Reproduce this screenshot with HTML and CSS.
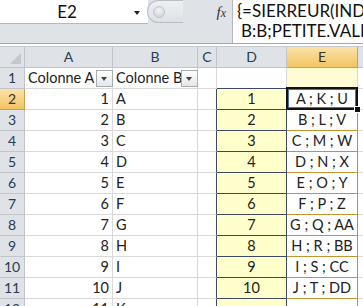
FILE: index.html
```html
<!DOCTYPE html>
<html>
<head>
	<meta charset="utf-8">
	<title>Colonne A / Colonne B</title>
	<link rel="stylesheet" href="styles.css">
</head>
<body>

<div class="formula-bar">
	<div class="bar-left">
		<div class="name-row">
			<div class="name-box">
				<span class="name">E2</span>
				<span class="caret"></span>
			</div>
			<div class="grip"><span class="knob"></span></div>
			<div class="fx">f<span>x</span></div>
		</div>
	</div>
	<div class="formula">
		<div class="line">{=SIERREUR(INDEX(A:A;</div>
		<div class="line wrap">B:B;PETITE.VALEUR(SI(</div>
	</div>
</div>
<div class="bar-gap"></div>

<div class="sheet">
	<!-- column headers -->
	<div class="corner">
		<svg width="11" height="11" viewBox="0 0 11 11"><polygon points="11,0 11,11 0,11" fill="#c4c8cd"/></svg>
	</div>
	<div class="ch">A</div>
	<div class="ch">B</div>
	<div class="ch">C</div>
	<div class="ch">D</div>
	<div class="ch ch-sel">E</div>
	<div class="ch"></div>

	<!-- row 1 -->
	<div class="rh">1</div>
	<div class="c head">Colonne A<span class="filter"></span></div>
	<div class="c head">Colonne B<span class="filter"></span></div>
	<div class="c"></div>
	<div class="c d-top"></div>
	<div class="c e-top"></div>
	<div class="c"></div>

	<div class="rh rh-sel">2</div>
	<div class="c num">1</div><div class="c">A</div><div class="c pre"></div>
	<div class="c d">1</div><div class="c e sel">A ; K ; U</div><div class="c"></div>

	<div class="rh">3</div>
	<div class="c num">2</div><div class="c">B</div><div class="c pre"></div>
	<div class="c d">2</div><div class="c e">B ; L ; V</div><div class="c"></div>

	<div class="rh">4</div>
	<div class="c num">3</div><div class="c">C</div><div class="c pre"></div>
	<div class="c d">3</div><div class="c e">C ; M ; W</div><div class="c"></div>

	<div class="rh">5</div>
	<div class="c num">4</div><div class="c">D</div><div class="c pre"></div>
	<div class="c d">4</div><div class="c e">D ; N ; X</div><div class="c"></div>

	<div class="rh">6</div>
	<div class="c num">5</div><div class="c">E</div><div class="c pre"></div>
	<div class="c d">5</div><div class="c e">E ; O ; Y</div><div class="c"></div>

	<div class="rh">7</div>
	<div class="c num">6</div><div class="c">F</div><div class="c pre"></div>
	<div class="c d">6</div><div class="c e">F ; P ; Z</div><div class="c"></div>

	<div class="rh">8</div>
	<div class="c num">7</div><div class="c">G</div><div class="c pre"></div>
	<div class="c d">7</div><div class="c e">G ; Q ; AA</div><div class="c"></div>

	<div class="rh">9</div>
	<div class="c num">8</div><div class="c">H</div><div class="c pre"></div>
	<div class="c d">8</div><div class="c e">H ; R ; BB</div><div class="c"></div>

	<div class="rh">10</div>
	<div class="c num">9</div><div class="c">I</div><div class="c pre"></div>
	<div class="c d">9</div><div class="c e">I ; S ; CC</div><div class="c"></div>

	<div class="rh">11</div>
	<div class="c num">10</div><div class="c">J</div><div class="c pre"></div>
	<div class="c d">10</div><div class="c e">J ; T ; DD</div><div class="c"></div>

	<div class="rh">12</div>
	<div class="c num">11</div><div class="c">K</div><div class="c pre"></div>
	<div class="c d"></div><div class="c e"></div><div class="c"></div>
</div>

</body>
</html>
```

FILE: styles.css
```css
body {
	margin: 0;
	background-color: #fff;
	color: #222;
	font-family: Lato, "Liberation Sans", sans-serif;
	overflow: hidden;
}

/* formula bar */

.formula-bar {
	display: flex;
	height: 44px;
	box-sizing: border-box;
	background-color: #dfe3e8;
	border-bottom: 1px solid #9fa6ae;
}

.bar-left {
	width: 232px;
	flex: none;
}

.name-row {
	display: flex;
	height: 24px;
}

.name-box {
	width: 148px;
	box-sizing: border-box;
	display: flex;
	align-items: center;
	background-color: #fff;
	border-bottom: 1px solid #b3b9c0;
}

.name {
	flex: 1;
	text-align: center;
	font-size: 17px;
	color: #111;
}

.caret {
	width: 0;
	height: 0;
	margin: 2px 8px 0 0;
	border-top: 4px solid #222;
	border-left: 3.5px solid transparent;
	border-right: 3.5px solid transparent;
}

.grip {
	width: 36px;
	height: 23px;
	margin-left: -1px;
	box-sizing: border-box;
	border: 1px solid #b9bec5;
	border-right: none;
	border-radius: 12px 0 0 12px;
	background: linear-gradient(#eef0f2, #dde1e6);
	display: flex;
	align-items: center;
	padding-left: 5px;
}

.knob {
	width: 10px;
	height: 10px;
	border-radius: 50%;
	background: radial-gradient(circle at 50% 35%, #f4f5f7, #c9cdd2);
	border: 1px solid #c2c6cb;
}

.fx {
	flex: 1;
	text-align: right;
	padding-right: 6px;
	font-family: "Liberation Serif", serif;
	font-style: italic;
	font-size: 15px;
	line-height: 24px;
	color: #333;
}

.fx span {
	font-size: 12px;
}

.formula {
	flex: 1;
	overflow: hidden;
	background-color: #fff;
	border-left: 1px solid #b3b9c0;
	padding: 1px 0 0 4px;
	font-size: 17px;
	line-height: 20px;
	color: #111;
}

.line {
	white-space: nowrap;
}

.wrap {
	padding-left: 4px;
}

.bar-gap {
	height: 2px;
	background-color: #fff;
}

/* sheet grid */

.sheet {
	display: grid;
	grid-template-columns: 25px 88px 85px 19px 70px 71px 1fr;
	grid-auto-rows: 21px;
	border-top: 1px solid #c5c9cf;
}

.corner, .ch, .rh {
	box-sizing: border-box;
	background-color: #dfe3e8;
	border-right: 1px solid #c0c5cb;
	border-bottom: 1px solid #c0c5cb;
	color: #2b3b52;
	font-size: 14px;
	text-align: center;
	line-height: 20px;
}

.corner {
	display: flex;
	align-items: flex-end;
	justify-content: flex-end;
	padding: 0 3px 3px 0;
}

.corner svg {
	display: block;
}

.ch-sel, .rh-sel {
	background: linear-gradient(#fbe3a8, #f2c463);
	border-color: #c9a24f;
	color: #3a3320;
}

.c {
	position: relative;
	box-sizing: border-box;
	border-right: 1px solid #d9d9d9;
	border-bottom: 1px solid #d9d9d9;
	padding: 0 3px;
	font-size: 14.5px;
	line-height: 20px;
	white-space: nowrap;
}

.num {
	text-align: right;
}

.head {
	overflow: visible;
}

.filter {
	position: absolute;
	z-index: 2;
	right: -1px;
	top: 2px;
	width: 17px;
	height: 17px;
	box-sizing: border-box;
	border: 1px solid #a9adb2;
	background: linear-gradient(#fdfdfd, #e4e7ea);
}

.filter::after {
	content: "";
	position: absolute;
	left: 4px;
	top: 6px;
	border-top: 4px solid #444;
	border-left: 3.5px solid transparent;
	border-right: 3.5px solid transparent;
}

.pre {
	border-right-color: #3d4a63;
}

.d-top {
	border-bottom-color: #3d4a63;
}

.e-top {
	background-color: #fffbd5;
}

.d {
	background-color: #ffffcc;
	border-right-color: #3d4a63;
	border-bottom-color: #3d4a63;
	text-align: center;
}

.e {
	border-right-color: #c3952e;
	border-bottom-color: #c3952e;
	text-align: center;
}

/* active cell */

.sel::before {
	content: "";
	position: absolute;
	top: -2px;
	left: -1px;
	right: -1px;
	bottom: -1px;
	border: 2px solid #111;
	box-shadow: inset 0 0 0 1px #4a6fb5;
}

.sel::after {
	content: "";
	position: absolute;
	z-index: 2;
	right: -4px;
	bottom: -4px;
	width: 5px;
	height: 5px;
	background-color: #111;
	border: 1px solid #fff;
}
```
